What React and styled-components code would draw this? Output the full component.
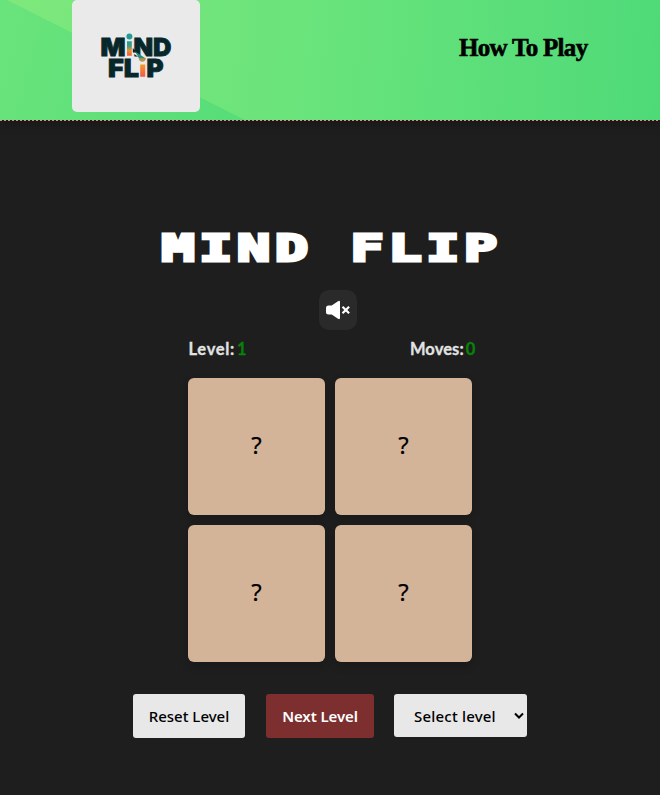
import React from "react";
import styled, { createGlobalStyle } from "styled-components";

const GlobalStyle = createGlobalStyle`
  *, *::before, *::after { box-sizing: border-box; }
  body { margin: 0; background: #1e1e1e; overflow: hidden; }
`;

const Page = styled.div`
  min-height: 795px;
  background: #1e1e1e;
  font-family: "Noto Sans", "Open Sans", sans-serif;
`;

const Header = styled.header`
  height: 121px;
  padding: 0 72px;
  display: flex;
  justify-content: space-between;
  align-items: flex-start;
  background: repeating-linear-gradient(90deg, #e08c86 0 2px, #241717 2px 4px);
  box-shadow: 0 4px 10px rgba(0, 0, 0, 0.2);
  position: relative;
`;

const Backdrop = styled.svg`
  position: absolute;
  inset: 0;
  width: 660px;
  height: 120px;
`;

const LogoCard = styled.a`
  position: relative;
  width: 128px;
  height: 112px;
  border-radius: 5px;
  background: #eaeaea;
  overflow: hidden;
`;

const HelpLink = styled.a`
  position: relative;
  margin-top: 32px;
  width: 129px;
  font: 700 25px/32px "Liberation Serif", serif;
  letter-spacing: -0.7px;
  color: #000;
  -webkit-text-stroke: 0.6px #000;
  white-space: nowrap;
`;

const Game = styled.main`
  display: flex;
  flex-direction: column;
  align-items: center;
`;

const Title = styled.h1`
  margin: 98px 0 0;
  height: 57px;
  font: 700 37px/58px "DejaVu Sans Mono", monospace;
  letter-spacing: 3.2px;
  margin-right: -4px;
  color: #fff;
  -webkit-text-stroke: 3px #fff;
  transform: translateY(0.5px) scaleX(1.485);
  white-space: pre;
`;

const SoundButton = styled.button`
  margin: 14px 0 0 16px;
  width: 38px;
  height: 40px;
  padding: 0;
  border: 0;
  border-radius: 10px;
  background: #2a2a2a;
  display: grid;
  place-items: center;
`;

const Stats = styled.div`
  width: 287px;
  height: 48px;
  margin-left: 4px;
  padding-top: 8px;
  display: flex;
  justify-content: space-between;
  font: 700 16.5px/22px "Lato", sans-serif;
  -webkit-text-stroke: 0.3px currentColor;
  color: #e3e3e3;
`;

const Stat = styled.span`
  letter-spacing: ${(p) => p.$spacing}px;
`;

const Value = styled.span`
  margin-left: 2px;
  color: #078407;
  -webkit-text-stroke: 0.3px #078407;
`;

const Board = styled.div`
  display: grid;
  grid-template-columns: repeat(2, 137px);
  grid-auto-rows: 137px;
  gap: 10px;
`;

const Card = styled.button`
  border: 0;
  padding: 0 0 4px;
  border-radius: 6px;
  background: #d4b499;
  box-shadow: 0 4px 8px rgba(0, 0, 0, 0.2);
  font: 400 24px/32px "Noto Sans", sans-serif;
  -webkit-text-stroke: 0.2px #000;
  color: #000;
`;

const Controls = styled.div`
  margin-top: 32px;
  display: flex;
  align-items: flex-start;
`;

const Control = styled.button`
  width: ${(p) => p.$width}px;
  height: 44px;
  margin-right: ${(p) => p.$gap}px;
  padding: 0;
  border: 0;
  border-radius: 3px;
  background: ${(p) => (p.$primary ? "#7d2f2f" : "#e8e8e8")};
  color: ${(p) => (p.$primary ? "#fff" : "#000")};
  font: ${(p) => (p.$primary ? 600 : 500)} 15px/22px "Noto Sans", sans-serif;
  letter-spacing: ${(p) => (p.$primary ? "-0.1px" : "0")};
  white-space: nowrap;
`;

const LevelSelect = styled(Control)`
  height: 43px;
  display: flex;
  align-items: center;
  justify-content: space-between;
  padding: 0 3px 0 20px;
  letter-spacing: 0.2px;
`;

function Logo() {
  return (
    <svg width="128" height="112" viewBox="0 0 128 112">
      <defs>
        <linearGradient id="stem" x1="0" y1="0" x2="0" y2="1">
          <stop offset="0" stopColor="#289b92" />
          <stop offset=".35" stopColor="#4b997c" />
          <stop offset=".65" stopColor="#ee922f" />
          <stop offset="1" stopColor="#f15a43" />
        </linearGradient>
        <linearGradient id="ember" x1="0" y1="0" x2="0" y2="1">
          <stop offset="0" stopColor="#f39a2a" />
          <stop offset="1" stopColor="#f25845" />
        </linearGradient>
      </defs>
      <g fontFamily="Inter, sans-serif" fontWeight="900" fontSize="25" fill="#08272a" stroke="#08272a" strokeWidth=".8">
        <text x="28.5" y="55.5" textLength="25" lengthAdjust="spacingAndGlyphs">M</text>
        <text x="61.5" y="55.5" textLength="38" lengthAdjust="spacingAndGlyphs">ND</text>
        <text x="36" y="76.5" textLength="31" lengthAdjust="spacingAndGlyphs">FL</text>
        <text x="74.5" y="76.5" textLength="17" lengthAdjust="spacingAndGlyphs">P</text>
      </g>
      <circle cx="57.4" cy="36.6" r="3" fill="#229c95" />
      <path d="M55 41.3h4.8v14.4H55z" fill="url(#stem)" />
      <path d="M61 51 73.5 59.5v1.5l-4.5-.5-2-3.3-6-4z" fill="#eaeaea" />
      <path d="m60.8 48 2.4 2.5-.8 2.6-1.6-.8z" fill="#08272a" />
      <path d="m63.2 51.5 10.6 7-1.8 2.3-5-2.2z" fill="#278b83" />
      <path d="M66.8 58.2h6.9c0 2-1.4 3.5-3.4 3.5s-3.5-1.5-3.5-3.5z" fill="#b3964b" />
      <path d="M68.2 64.6h5v12.2h-5z" fill="url(#ember)" />
    </svg>
  );
}

function HeaderBackdrop() {
  return (
    <Backdrop viewBox="0 0 660 120" preserveAspectRatio="none">
      <defs>
        <linearGradient id="wide" gradientUnits="userSpaceOnUse" x1="0" y1="0" x2="660" y2="60">
          <stop offset="0" stopColor="#7fe87c" />
          <stop offset=".5" stopColor="#68e37b" />
          <stop offset="1" stopColor="#4fda78" />
        </linearGradient>
        <linearGradient id="corner" gradientUnits="userSpaceOnUse" x1="0" y1="60" x2="230" y2="120">
          <stop offset="0" stopColor="#69e37b" />
          <stop offset="1" stopColor="#57dd79" />
        </linearGradient>
      </defs>
      <path d="M0 0h660v120H0z" fill="url(#wide)" />
      <path d="M0 0h7l238 120H0z" fill="url(#corner)" />
    </Backdrop>
  );
}

export default function App() {
  return (
    <Page>
      <GlobalStyle />
      <Header>
        <HeaderBackdrop />
        <LogoCard><Logo /></LogoCard>
        <HelpLink>How To Play</HelpLink>
      </Header>
      <Game>
        <Title>MIND FLIP</Title>
        <SoundButton aria-label="Unmute">
          <svg width="24" height="20" viewBox="0 0 24 20">
            <path d="M2.5 5.5h3.2L12 1.2q2-1.2 2 1v15.6q0 2.2-2 1l-6.3-4.3H2.5Q0 14.5 0 12V8q0-2.5 2.5-2.5z" fill="#fff" />
            <path d="m16.5 6.7 6.6 6.6m0-6.6-6.6 6.6" stroke="#fff" strokeWidth="2.2" />
          </svg>
        </SoundButton>
        <Stats>
          <Stat $spacing={0.7}>Level:<Value>1</Value></Stat>
          <Stat $spacing={0.1}>Moves:<Value>0</Value></Stat>
        </Stats>
        <Board>
          {[0, 1, 2, 3].map((id) => <Card key={id}>?</Card>)}
        </Board>
        <Controls>
          <Control $width={112} $gap={21}>Reset Level</Control>
          <Control $width={108} $gap={20} $primary>Next Level</Control>
          <LevelSelect $width={133} $gap={0}>
            Select level
            <svg width="10" height="8" viewBox="0 0 10 8">
              <path d="m1 1.5 4 4 4-4" fill="none" stroke="#000" strokeWidth="2" />
            </svg>
          </LevelSelect>
        </Controls>
      </Game>
    </Page>
  );
}
